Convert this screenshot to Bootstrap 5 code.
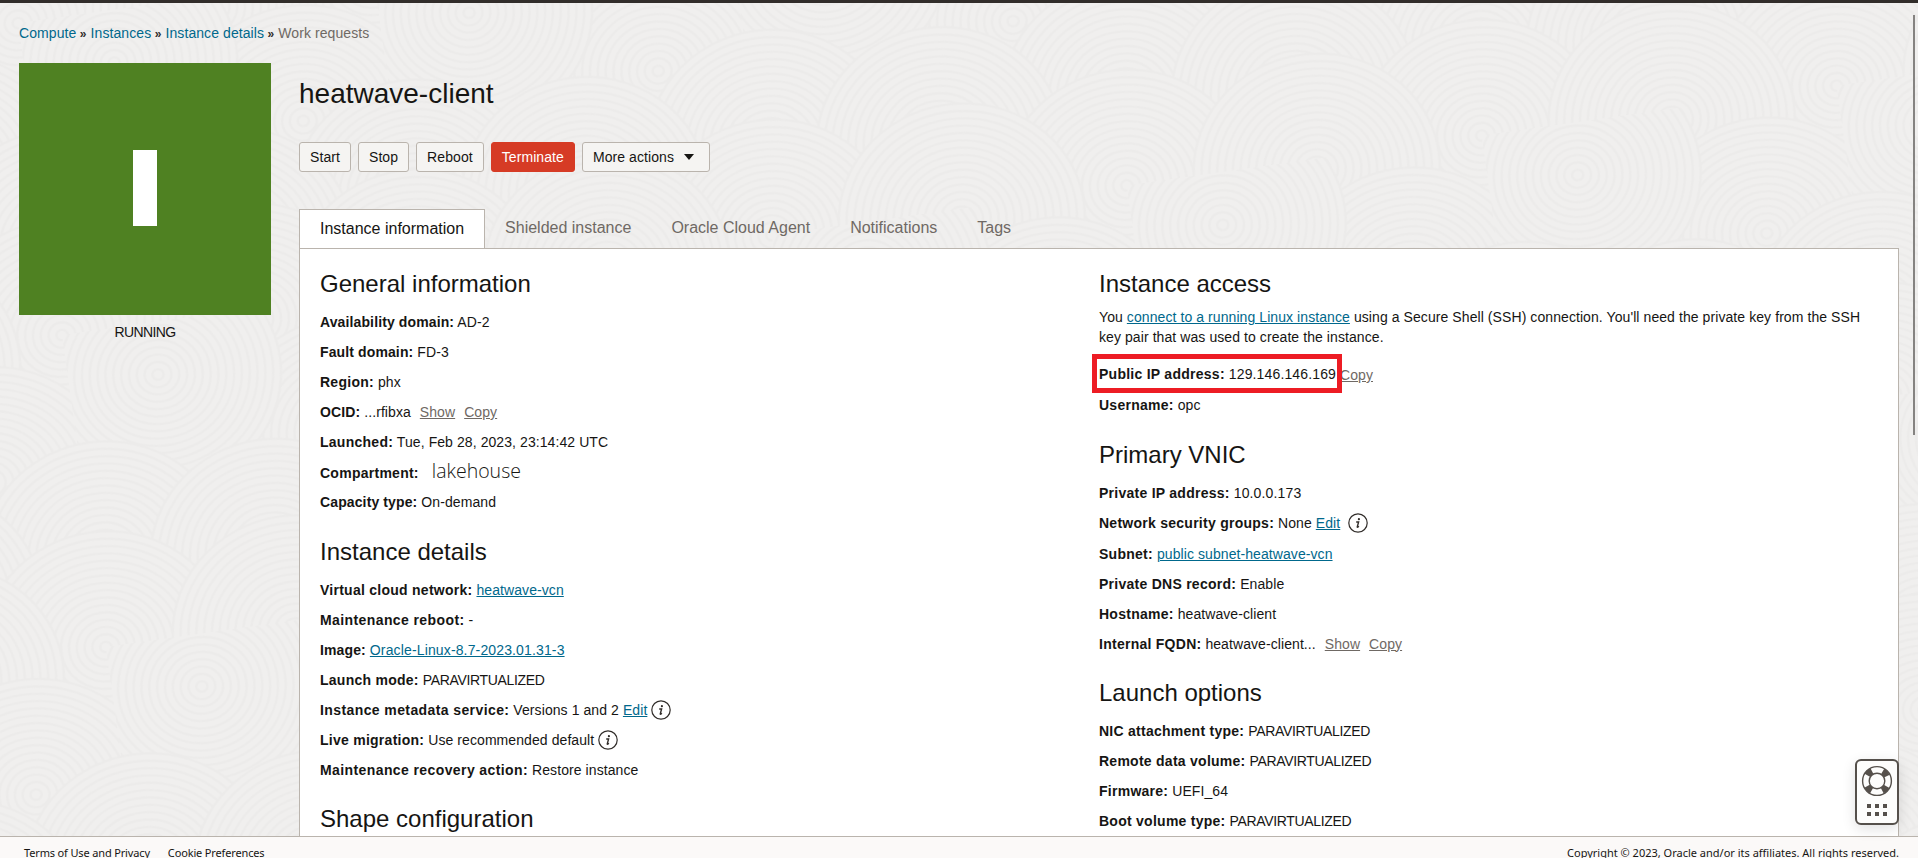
<!DOCTYPE html>
<html lang="en">
<head>
<meta charset="utf-8">
<meta name="viewport" content="width=device-width, initial-scale=1">
<title>heatwave-client</title>
<link href="https://cdn.jsdelivr.net/npm/bootstrap@5.3.0/dist/css/bootstrap.min.css" rel="stylesheet">
<style>
body{font-family:"Liberation Sans",Arial,sans-serif;font-size:14px;line-height:20px;letter-spacing:.08px;color:#161513;background:#f0efee;height:100vh}
a{color:#00688c}
a.quiet{color:#6f6964}
.topline{height:3px;background:#312d2a}
.texture{inset:0;z-index:-1}
.crumbs{font-size:14px;padding:20px 19px 0;height:60px;color:#6f6964}
.crumbs i{font-style:normal;font-weight:bold;color:#312d2a;font-size:12px;margin-left:-.5px}
.side{width:252px;margin-left:19px}
.state{height:252px;background:#4f8122;padding-bottom:2px}
.state span{width:24px;height:76px;background:#fff}
.state-name{margin-top:7px;letter-spacing:-.6px}
.main-col{margin-left:28px;margin-right:19px}
h1,h2,.nav-tabs{letter-spacing:0}
h1{font-size:28px;line-height:36px;margin:13px 0 0}
.actions{margin-top:30px;gap:7px}
.actions .btn{font-size:14px;line-height:20px;letter-spacing:.08px;padding:4px 10px;border:1px solid #bab4ad;border-radius:3px;background:#f5f4f2;color:#161513}
.actions .btn.kill{background:#d63b25;border-color:#d63b25;color:#fff}
.caret{width:0;height:0;border:5px solid transparent;border-top:6px solid #161513;border-bottom:0;margin:0 5px 0 10px}
.nav-tabs{margin-top:37px;border:0;font-size:16px}
.nav-tabs .nav-link{border-radius:0;padding:8px 20px;height:40px;line-height:22px;color:#6f6964;border:0}
.nav-tabs .nav-link.active{border:1px solid;border-color:#bab4ad #bab4ad #fff;background:#fff;color:#161513}
.panel{border:1px solid #bab4ad;border-bottom:0;background:#fff;padding:19px 20px 0}
.panel h2{font-size:24px;line-height:32px;margin:0 0 7px}
.panel .line{height:30px;line-height:30px;white-space:nowrap}
.panel .line.taller{height:31px;line-height:31px}
.line b{letter-spacing:.26px}
.line b.tight{letter-spacing:.12px}
.line b.wide{letter-spacing:.4px}
.line .quiet{margin-left:5px}
.line .near{margin-left:0;position:relative;top:1px}
.caps{letter-spacing:-.34px}
.digits{letter-spacing:.14px}
.intro{margin-bottom:12px}
.group-gap{margin-bottom:18.5px}
.info{width:20px;height:20px;vertical-align:-5px;margin-left:3.5px}
.lake{font-family:"Open Sans",sans-serif;font-weight:300;font-size:19.5px;letter-spacing:0;margin-left:9px;line-height:28px}
.hl{inset:-5px auto auto -7px;width:250px;height:39px;border:5px solid #ed1c24;z-index:2}
.foot{height:22px;background:#fbf9f8;border-top:1px solid #bab4ad;font-family:"Noto Sans",sans-serif;font-size:11px;letter-spacing:0;padding:6px 19px 0 25px;z-index:3}
.legal{letter-spacing:-.15px;gap:18px;margin-left:-1px}
.help{right:19px;bottom:33px;width:44px;height:66px;border:2px solid #55504b;border-radius:6px;background:#fdfdfc;box-shadow:0 4px 14px rgba(0,0,0,.12);z-index:4}
.thumb{right:3px;top:15px;width:2px;height:420px;background:#858381}
</style>
</head>
<body class="d-flex flex-column overflow-hidden position-relative">
<svg class="texture position-absolute w-100 h-100" aria-hidden="true">
<defs>
<g id="rings" fill="none" stroke="#ecebea" stroke-width="2"><circle r="110" fill="#f0efee"/><circle r="103"/><circle r="96"/><circle r="89"/><circle r="82"/><circle r="75"/><circle r="68"/><circle r="61"/><circle r="54"/><circle r="47"/><circle r="40"/><circle r="33"/><circle r="26"/><circle r="19"/><circle r="12"/><circle r="5"/></g>
<pattern id="waves" width="320" height="300" patternUnits="userSpaceOnUse" patternTransform="translate(62 335) rotate(-8) scale(1.12 1.05)">
<use href="#rings" x="0" y="0"/><use href="#rings" x="320" y="0"/><use href="#rings" x="170" y="10"/><use href="#rings" x="240" y="130"/><use href="#rings" x="-80" y="130"/><use href="#rings" x="80" y="50"/><use href="#rings" x="10" y="215"/><use href="#rings" x="330" y="215"/><use href="#rings" x="160" y="235"/><use href="#rings" x="0" y="300"/><use href="#rings" x="320" y="300"/><use href="#rings" x="170" y="310"/>
</pattern></defs>
<rect width="100%" height="100%" fill="url(#waves)"/>
</svg>
<svg class="d-none"><defs><symbol id="i" viewBox="0 0 20 20"><circle cx="10" cy="10" r="9.2" fill="#fff" stroke="#312d2a" stroke-width="1.2"/><circle cx="10.9" cy="6.2" r="1.1" fill="#312d2a"/><path d="M8.2 9h2.4l-1.4 5.1q0 .6 1.7-.8" fill="none" stroke="#312d2a" stroke-width="1.4"/></symbol></defs></svg>
<div class="topline flex-shrink-0"></div>
<nav class="crumbs flex-shrink-0 lh-base"><a class="text-decoration-none" href="#">Compute</a> <i>»</i> <a class="text-decoration-none" href="#">Instances</a> <i>»</i> <a class="text-decoration-none" href="#">Instance details</a> <i>»</i> Work requests</nav>
<div class="d-flex flex-grow-1 overflow-hidden">
<aside class="side flex-shrink-0 text-center">
<div class="state d-flex align-items-center justify-content-center"><span></span></div>
<div class="state-name">RUNNING</div>
</aside>
<main class="main-col flex-grow-1 d-flex flex-column">
<h1 class="fw-normal">heatwave-client</h1>
<div class="actions d-flex"><button class="btn">Start</button><button class="btn">Stop</button><button class="btn">Reboot</button><button class="btn kill">Terminate</button><button class="btn d-flex align-items-center">More actions<span class="caret"></span></button></div>
<ul class="nav nav-tabs">
<li class="nav-item"><a class="nav-link active" href="#">Instance information</a></li><li class="nav-item"><a class="nav-link" href="#">Shielded instance</a></li><li class="nav-item"><a class="nav-link" href="#">Oracle Cloud Agent</a></li><li class="nav-item"><a class="nav-link" href="#">Notifications</a></li><li class="nav-item"><a class="nav-link" href="#">Tags</a></li>
</ul>
<section class="panel flex-grow-1">
<div class="row g-0">
<div class="col-6">
<h2 class="fw-normal">General information</h2>
<div class="group-gap">
<div class="line"><b class="tight">Availability domain:</b> AD-2</div>
<div class="line"><b class="tight">Fault domain:</b> FD-3</div>
<div class="line"><b>Region:</b> phx</div>
<div class="line"><b class="tight">OCID:</b> ...rfibxa <a class="quiet" href="#">Show</a> <a class="quiet" href="#">Copy</a></div>
<div class="line"><b>Launched:</b> Tue, Feb 28, 2023, 23:14:42 UTC</div>
<div class="line"><b>Compartment:</b> <span class="lake">lakehouse</span></div>
<div class="line"><b class="tight">Capacity type:</b> On-demand</div>
</div>
<h2 class="fw-normal">Instance details</h2>
<div class="group-gap">
<div class="line"><b>Virtual cloud network:</b> <a href="#">heatwave-vcn</a></div>
<div class="line"><b class="wide">Maintenance reboot:</b> -</div>
<div class="line"><b class="tight">Image:</b> <a class="digits" href="#">Oracle-Linux-8.7-2023.01.31-3</a></div>
<div class="line"><b>Launch mode:</b> <span class="caps">PARAVIRTUALIZED</span></div>
<div class="line"><b class="wide">Instance metadata service:</b> Versions 1 and 2 <a href="#">Edit</a><svg class="info"><use href="#i"/></svg></div>
<div class="line"><b>Live migration:</b> Use recommended default<svg class="info"><use href="#i"/></svg></div>
<div class="line"><b class="wide">Maintenance recovery action:</b> Restore instance</div>
</div>
<h2 class="fw-normal">Shape configuration</h2>
</div>
<div class="col-6">
<h2 class="fw-normal">Instance access</h2>
<p class="intro">You <a href="#">connect to a running Linux instance</a> using a Secure Shell (SSH) connection. You'll need the private key from the SSH<br>key pair that was used to create the instance.</p>
<div class="group-gap">
<div class="line taller position-relative"><b>Public IP address:</b> <span class="digits">129.146.146.169</span> <a class="quiet near" href="#">Copy</a><span class="hl position-absolute"></span></div>
<div class="line"><b>Username:</b> opc</div>
</div>
<h2 class="fw-normal">Primary VNIC</h2>
<div class="group-gap">
<div class="line"><b>Private IP address:</b> <span class="digits">10.0.0.173</span></div>
<div class="line taller"><b>Network security groups:</b> None <a href="#">Edit</a> <svg class="info"><use href="#i"/></svg></div>
<div class="line"><b>Subnet:</b> <a href="#">public subnet-heatwave-vcn</a></div>
<div class="line"><b>Private DNS record:</b> Enable</div>
<div class="line"><b>Hostname:</b> heatwave-client</div>
<div class="line"><b>Internal FQDN:</b> heatwave-client... <a class="quiet" href="#">Show</a> <a class="quiet" href="#">Copy</a></div>
</div>
<h2 class="fw-normal">Launch options</h2>
<div class="line"><b>NIC attachment type:</b> <span class="caps">PARAVIRTUALIZED</span></div>
<div class="line"><b>Remote data volume:</b> <span class="caps">PARAVIRTUALIZED</span></div>
<div class="line"><b>Firmware:</b> UEFI_64</div>
<div class="line"><b>Boot volume type:</b> <span class="caps">PARAVIRTUALIZED</span></div>
</div>
</div>
</section>
</main>
</div>
<footer class="foot flex-shrink-0 d-flex justify-content-between"><div class="legal d-flex"><span>Terms of Use and Privacy</span><span>Cookie Preferences</span></div><div>Copyright © 2023, Oracle and/or its affiliates. All rights reserved.</div></footer>
<div class="help position-absolute">
<svg width="40" height="62" viewBox="0 0 40 62" fill="none" stroke="#55504b"><circle cx="20" cy="20" r="14.4" stroke-width="1.4"/><circle cx="20" cy="20" r="7.8" stroke-width="1.4"/><circle cx="20" cy="20" r="11" stroke-width="6.5" stroke-dasharray="6.2 11.08" stroke-dashoffset="-5.54"/><path d="M10 45h4m4 0h4m4 0h4M10 53h4m4 0h4m4 0h4" stroke-width="4"/></svg>
</div>
<div class="thumb position-absolute"></div>
<script src="https://cdn.jsdelivr.net/npm/bootstrap@5.3.0/dist/js/bootstrap.bundle.min.js"></script>
</body>
</html>
